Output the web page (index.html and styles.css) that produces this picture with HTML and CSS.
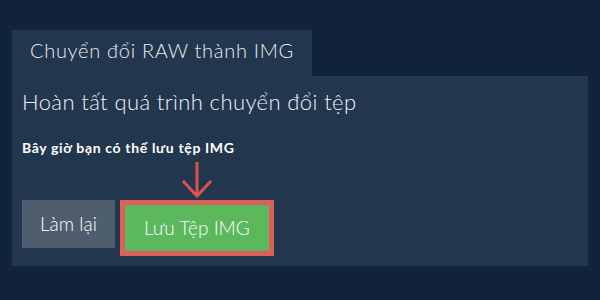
FILE: index.html
```html
<!DOCTYPE html>
<html lang="vi">
<head>
    <meta charset="UTF-8">
    <meta name="viewport" content="width=device-width, initial-scale=1.0">
    <title>Chuyển đổi RAW thành IMG</title>
    <link rel="stylesheet" href="styles.css">
</head>
<body>
    <div class="converter">
        <div class="tab">Chuyển đổi RAW thành IMG</div>
        <div class="panel">
            <h2>Hoàn tất quá trình chuyển đổi tệp</h2>
            <p class="note">Bây giờ bạn có thể lưu tệp IMG</p>
            <div class="actions">
                <button class="btn btn-reset">Làm lại</button>
                <div class="save-wrap">
                    <svg class="arrow" width="34" height="40" viewBox="0 0 34 40">
                        <path d="M17 2 V36 M3 21 L17 36 L31 21" fill="none" stroke="#d9534f" stroke-width="3"/>
                    </svg>
                    <button class="btn btn-save">Lưu Tệp IMG</button>
                </div>
            </div>
        </div>
    </div>
</body>
</html>
```

FILE: styles.css
```css
body {
    margin: 0;
    background-color: #10233a;
    font-family: Lato, "Noto Sans", sans-serif;
    color: #fff;
}

.converter {
    padding: 30px 12px 0;
}

.tab {
    display: inline-block;
    background-color: #22374d;
    color: #e9edf1;
    font-size: 20px;
    font-weight: 300;
    letter-spacing: 0.7px;
    line-height: 24px;
    padding: 8px 18px 14px;
}

.panel {
    background-color: #22374d;
    padding: 13px 10px 10px;
}

.panel h2 {
    margin: 0;
    font-size: 22px;
    font-weight: 300;
    letter-spacing: 0.4px;
    line-height: 26px;
    color: #eef1f4;
}

.note {
    margin: 24px 0 0;
    font-size: 14px;
    font-weight: bold;
    letter-spacing: 0.65px;
    line-height: 17px;
}

.actions {
    display: flex;
    align-items: flex-start;
    gap: 5px;
    margin-top: 44px;
}

.btn {
    font-family: Lato, "Noto Sans", sans-serif;
    font-size: 19px;
    font-weight: 300;
    line-height: 24px;
    color: #fff;
    border: none;
    cursor: pointer;
}

.btn-reset {
    background-color: #4f5e6e;
    padding: 12px 18px;
}

.save-wrap {
    position: relative;
}

.btn-save {
    background-color: #5cb85c;
    border: 5px solid #dc5f59;
    padding: 11px 19px;
}

.arrow {
    position: absolute;
    left: 60px;
    top: -40px;
}
```
